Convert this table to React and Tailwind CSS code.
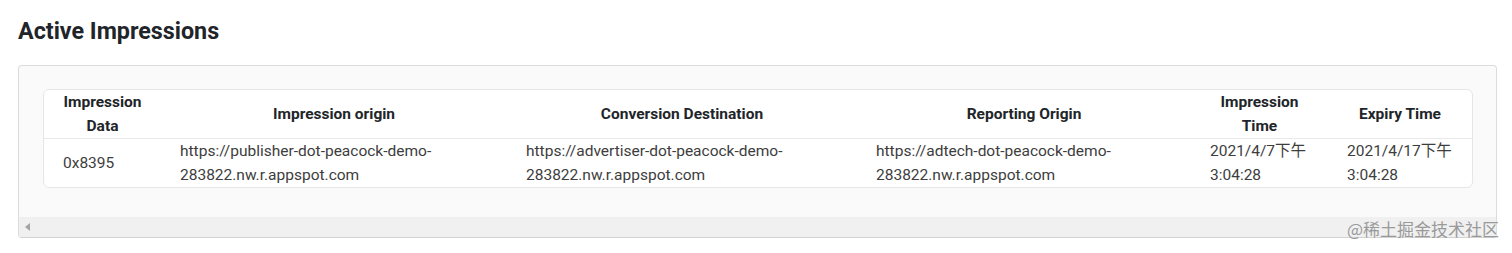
import React from "react";

const rows = [
  {
    data: "0x8395",
    origin: "https://publisher-dot-peacock-demo-283822.nw.r.appspot.com",
    destination: "https://advertiser-dot-peacock-demo-283822.nw.r.appspot.com",
    reporting: "https://adtech-dot-peacock-demo-283822.nw.r.appspot.com",
    time: "2021/4/7下午3:04:28",
    expiry: "2021/4/17下午3:04:28",
  },
];

const splitUrl = (url) => {
  const i = url.indexOf("demo-") + 5;
  return [url.slice(0, i), url.slice(i)];
};

const splitTime = (t) => {
  const i = t.indexOf("午") + 1;
  return [t.slice(0, i), t.slice(i)];
};

const Lines = ({ parts }) => (
  <>
    {parts.map((p, i) => (
      <div key={i} className="whitespace-nowrap">
        {p}
      </div>
    ))}
  </>
);

const App = () => {
  return (
    <div
      className="relative h-[253px] w-[1512px] overflow-hidden bg-white pl-[18px] pr-[15px] pt-[17px]"
      style={{ fontFamily: "Roboto, 'Noto Sans CJK SC', sans-serif" }}
    >
      <h2 className="text-[23.3px] font-bold leading-[29px] text-[#212529]">Active Impressions</h2>

      <div className="mt-[19px] h-[173px] overflow-hidden rounded-[4px] border border-[#dcdcdc] border-b-[#d2d2d2] bg-[#fafafa]">
        <div className="h-[151px] px-[24px] pt-[23px]">
          <table className="w-full table-fixed border-separate border-spacing-0 overflow-hidden rounded-[6px] border border-[#e6e6e6] bg-white text-[15.5px] leading-[24px]">
            <colgroup>
              <col className="w-[117px]" />
              <col className="w-[346px]" />
              <col className="w-[350px]" />
              <col className="w-[334px]" />
              <col className="w-[137px]" />
              <col className="w-[144px]" />
            </colgroup>
            <thead>
              <tr className="text-center text-[#212529]">
                <th className="border-b border-[#e9e9e9] px-[19px] font-bold">Impression Data</th>
                <th className="border-b border-[#e9e9e9] px-[19px] font-bold">Impression origin</th>
                <th className="border-b border-[#e9e9e9] px-[19px] font-bold">Conversion Destination</th>
                <th className="border-b border-[#e9e9e9] px-[19px] font-bold">Reporting Origin</th>
                <th className="border-b border-[#e9e9e9] px-[19px] font-bold">Impression Time</th>
                <th className="border-b border-[#e9e9e9] px-[19px] font-bold">Expiry Time</th>
              </tr>
            </thead>
            <tbody className="text-[#3d3d3d]">
              {rows.map((r) => (
                <tr key={r.data}>
                  <td className="px-[19px] align-middle">{r.data}</td>
                  <td className="px-[19px]">
                    <Lines parts={splitUrl(r.origin)} />
                  </td>
                  <td className="px-[19px]">
                    <Lines parts={splitUrl(r.destination)} />
                  </td>
                  <td className="px-[19px]">
                    <Lines parts={splitUrl(r.reporting)} />
                  </td>
                  <td className="px-[19px]">
                    <Lines parts={splitTime(r.time)} />
                  </td>
                  <td className="px-[19px]">
                    <Lines parts={splitTime(r.expiry)} />
                  </td>
                </tr>
              ))}
            </tbody>
          </table>
        </div>

        {/* horizontal scrollbar track */}
        <div className="flex h-[20px] items-center bg-[#f0f0f0] pl-[6px]">
          <svg width="6" height="8" viewBox="0 0 6 8">
            <path d="M5 0 L0 4 L5 8 Z" fill="#a3a3a3" />
          </svg>
        </div>
      </div>

      <div
        className="absolute right-[13px] top-[219px] text-[17px] leading-[20px] text-[#9a9a9a]"
        style={{ fontFamily: "'Noto Sans CJK SC', sans-serif" }}
      >
        @稀土掘金技术社区
      </div>
    </div>
  );
};

export default App;
